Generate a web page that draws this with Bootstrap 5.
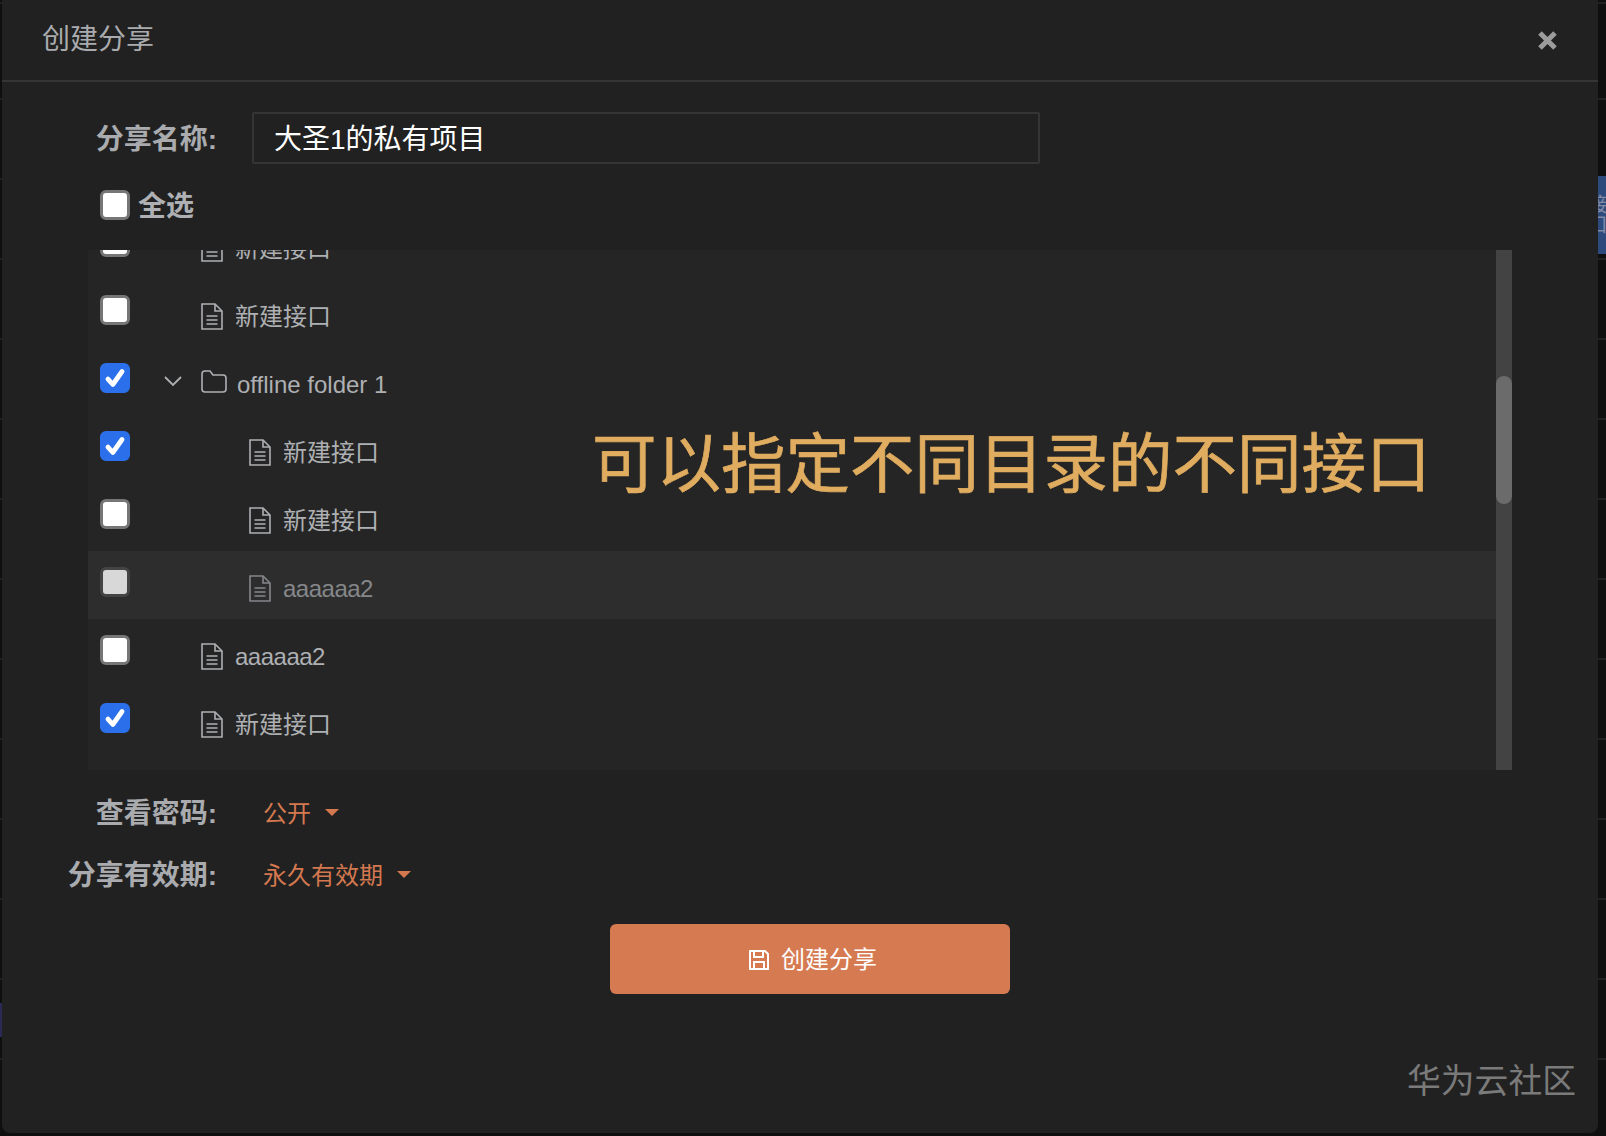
<!DOCTYPE html>
<html lang="zh-CN">
<head>
  <meta charset="UTF-8" />
  <meta name="viewport" content="width=device-width, initial-scale=1" />
  <title>创建分享</title>
  <link href="https://cdn.jsdelivr.net/npm/bootstrap@5.3.3/dist/css/bootstrap.min.css" rel="stylesheet" />
  <style>
    html, body { height: 100%; }
    body {
      margin: 0;
      overflow: hidden;
      font-family: "Liberation Sans", "Noto Sans CJK SC", sans-serif;
      background-color: #0f0f0f;
      background-image: repeating-linear-gradient(180deg, transparent 0, transparent 78px, #222 78px, #222 80px);
      background-position: 0 20px;
    }
    .share-modal {
      position: relative;
      width: 1596px;
      height: 1133px;
      margin-left: 2px;
      background: #212121;
      border: 0;
      border-radius: 0 0 8px 8px;
      color: #aeb0b3;
    }
    .share-head {
      height: 82px;
      padding: 0 41px 0 40px;
      border-bottom: 2px solid #353535;
    }
    .share-title { font-size: 28px; color: #a9abae; }
    .close-x { width: 21px; height: 21px; margin-right: -1px; }
    .share-body { padding-top: 30px; }
    .field-label {
      width: 215px;
      flex-shrink: 0;
      padding-top: 2px;
      text-align: right;
      font-size: 28px;
      font-weight: 700;
      color: #a9abae;
    }
    .name-row { height: 52px; }
    .name-row .field-label { padding-top: 4px; }
    .name-input {
      width: 788px;
      height: 52px;
      margin-left: 35px;
      padding: 0 20px 3px;
      font-size: 28px;
      color: #fff;
      background: #212121;
      border: 2px solid #353535;
      border-radius: 2px;
    }
    .name-input:focus { color: #fff; background: #212121; border-color: #353535; box-shadow: none; }
    .all-row { height: 30px; margin: 26px 0 30px 98px; }
    .all-row label { padding-top: 4px; font-size: 28px; font-weight: 700; margin-left: 8px; color: #aeb0b3; }
    .tick.form-check-input {
      width: 30px;
      height: 30px;
      margin: 0;
      flex-shrink: 0;
      background-color: #fff;
      border: 3px solid #767676;
      border-radius: 6px;
      opacity: 1;
    }
    .tick.form-check-input:checked {
      background-color: #2b70ea;
      border-color: #2b70ea;
      background-size: 26px 26px;
      background-position: center;
      background-image: url("data:image/svg+xml,%3csvg xmlns='http://www.w3.org/2000/svg' viewBox='0 0 24 24'%3e%3cpath fill='none' stroke='%23fff' stroke-linecap='round' stroke-linejoin='round' stroke-width='4.4' d='M5.5 13l4.5 5 8.5-12'/%3e%3c/svg%3e");
    }
    .tick.form-check-input:disabled { background-color: #d8d8d8; border-color: #444; }
    .tree-wrap {
      width: 1424px;
      height: 520px;
      margin-left: 86px;
      background: #252525;
    }
    .tree-clip { position: relative; overflow: hidden; flex-grow: 1; }
    .tree-rows { margin-top: -39px; }
    .tree-row { height: 68px; padding-left: 12px; font-size: 24px; color: #aeb0b3; }
    .tree-row .tick { margin-top: -6px; }
    .tree-row.is-off { background: #2d2d2d; color: #85878a; }
    .indent-1 { width: 71px; flex-shrink: 0; }
    .indent-2 { width: 119px; flex-shrink: 0; }
    .arrow-box { width: 71px; flex-shrink: 0; padding-left: 34px; margin-top: -3px; }
    .row-label { margin-left: 12px; margin-top: 8px; }
    .row-label.tight { letter-spacing: -0.5px; }
    .row-icon { margin-top: 6px; flex-shrink: 0; }
    .row-icon.folder-icon { margin-top: 0; }
    .folder-label { margin-left: 10px; margin-top: 8px; }
    .tree-bar { width: 16px; flex-shrink: 0; background: #434343; }
    .tree-thumb { width: 16px; height: 128px; margin-top: 126px; background: #6b6b6b; border-radius: 8px; }
    .tree-note {
      position: absolute;
      left: 504px;
      top: 170px;
      font-size: 64.5px;
      line-height: 90px;
      color: #e0ad60;
      -webkit-text-stroke: 0.7px #e0ad60;
      white-space: nowrap;
    }
    .pick-row { height: 36px; }
    .pick-row.first { margin-top: 25px; }
    .pick-row.second { margin-top: 26px; }
    .pick-link.dropdown-toggle {
      margin-left: 46px;
      padding: 2px 0 0;
      font-size: 24px;
      color: #d4784f;
      background: none;
      border: 0;
      border-radius: 0;
    }
    .pick-link.dropdown-toggle::after {
      margin-left: 14px;
      border-top: 7px solid #d4784f;
      border-right: 7px solid transparent;
      border-left: 7px solid transparent;
      border-bottom: 0;
      vertical-align: 6px;
    }
    .make-wrap { padding-left: 20px; margin-top: 31px; }
    .make-btn.btn {
      width: 400px;
      height: 70px;
      padding: 2px 0 0 5px;
      font-size: 24px;
      color: #fff;
      background: #d67a52;
      border: 0;
      border-radius: 6px;
    }
    .make-btn svg { margin-right: 11px; }
    .brand-mark {
      position: absolute;
      right: 22px;
      bottom: 26px;
      font-size: 33.8px;
      color: #7a7a7a;
    }
    .side-tab {
      position: absolute;
      left: 1598px;
      top: 176px;
      width: 8px;
      height: 78px;
      overflow: hidden;
      background: #2e4a7c;
      color: #7f8ba5;
      font-size: 20px;
      line-height: 20px;
      writing-mode: vertical-rl;
      padding-top: 18px;
    }
    .side-mark {
      position: absolute;
      left: 0;
      top: 1003px;
      width: 2px;
      height: 34px;
      background: #2b2a55;
    }
  </style>
</head>
<body>
  <div class="side-mark"></div>
  <div class="side-tab">接口</div>

  <div class="modal-content share-modal">
    <!-- Header -->
    <div class="d-flex align-items-center justify-content-between share-head">
      <div class="share-title">创建分享</div>
      <svg class="close-x" viewBox="0 0 21 21"><path d="M3 3l15 15M18 3L3 18" stroke="#9c9c9c" stroke-width="5" fill="none"/></svg>
    </div>

    <div class="share-body">
      <div class="d-flex align-items-center name-row">
        <div class="field-label">分享名称:</div>
        <input class="form-control name-input" type="text" value="大圣1的私有项目" />
      </div>

      <div class="d-flex align-items-center all-row">
        <input class="form-check-input tick" type="checkbox" id="selectAll" />
        <label for="selectAll">全选</label>
      </div>

      <!-- Tree -->
      <div class="d-flex tree-wrap">
        <div class="tree-clip">
          <div class="tree-rows" id="treeRows"></div>
          <div class="tree-note">可以指定不同目录的不同接口</div>
        </div>
        <div class="tree-bar"><div class="tree-thumb"></div></div>
      </div>

      <div class="d-flex align-items-center pick-row first">
        <div class="field-label">查看密码:</div>
        <button class="btn dropdown-toggle pick-link" type="button">公开</button>
      </div>
      <div class="d-flex align-items-center pick-row second">
        <div class="field-label">分享有效期:</div>
        <button class="btn dropdown-toggle pick-link" type="button">永久有效期</button>
      </div>

      <div class="d-flex justify-content-center make-wrap">
        <button class="btn make-btn d-flex align-items-center justify-content-center" type="button">
          <svg width="22" height="22" viewBox="0 0 22 22" fill="none" stroke="#fff" stroke-width="2"><path d="M2 2h15l3 3v15H2z"/><path d="M6 2v6h9V2M6 20v-7h10v7"/></svg>
          创建分享
        </button>
      </div>
    </div>

    <div class="brand-mark">华为云社区</div>
  </div>

  <script>
    const fileIcon = `<svg class="row-icon" width="22" height="27" viewBox="0 0 22 27" fill="none" stroke="currentColor" stroke-width="1.6"><path d="M1 1h13l7 7v18H1z"/><path d="M14 1v7h7"/><path d="M5.5 13h11M5.5 17h11M5.5 21h11"/></svg>`;
    const folderIcon = `<svg class="row-icon folder-icon" width="26" height="23" viewBox="0 0 26 23" fill="none" stroke="currentColor" stroke-width="1.6" stroke-linejoin="round"><path d="M1 4a3 3 0 0 1 3-3h5l3 4h10a3 3 0 0 1 3 3v11a3 3 0 0 1-3 3H4a3 3 0 0 1-3-3z"/></svg>`;
    const arrowIcon = `<svg width="18" height="11" viewBox="0 0 18 11" fill="none" stroke="currentColor" stroke-width="1.8"><path d="M1 1l8 8 8-8"/></svg>`;

    const rows = [
      { level: 1, text: '新建接口' },
      { level: 1, text: '新建接口' },
      { folder: true, text: 'offline folder 1', checked: true },
      { level: 2, text: '新建接口', checked: true },
      { level: 2, text: '新建接口' },
      { level: 2, text: 'aaaaaa2', off: true },
      { level: 1, text: 'aaaaaa2' },
      { level: 1, text: '新建接口', checked: true }
    ];

    document.getElementById('treeRows').innerHTML = rows.map(row => {
      const box = `<input class="form-check-input tick" type="checkbox" ${row.checked ? 'checked' : ''} ${row.off ? 'disabled' : ''} />`;
      const tight = row.text.startsWith('a') ? 'tight' : '';
      const body = row.folder
        ? `<span class="arrow-box">${arrowIcon}</span>${folderIcon}<span class="folder-label">${row.text}</span>`
        : `<span class="indent-${row.level}"></span>${fileIcon}<span class="row-label ${tight}">${row.text}</span>`;
      return `<div class="d-flex align-items-center tree-row ${row.off ? 'is-off' : ''}">${box}${body}</div>`;
    }).join('');
  </script>
  <script src="https://cdn.jsdelivr.net/npm/bootstrap@5.3.3/dist/js/bootstrap.bundle.min.js"></script>
</body>
</html>
